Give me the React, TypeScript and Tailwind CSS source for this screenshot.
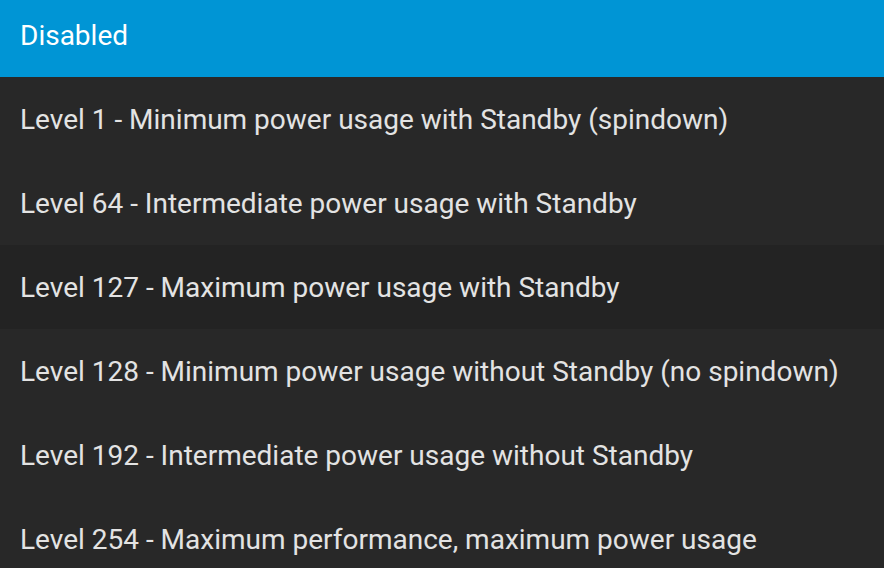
const OPTIONS = [
  "Level 1 - Minimum power usage with Standby (spindown)",
  "Level 64 - Intermediate power usage with Standby",
  "Level 127 - Maximum power usage with Standby",
  "Level 128 - Minimum power usage without Standby (no spindown)",
  "Level 192 - Intermediate power usage without Standby",
  "Level 254 - Maximum performance, maximum power usage",
];

export default function App() {
  return (
    <div
      className="h-[568px] w-[884px] overflow-hidden bg-[#282828] text-[28px] text-[#e3e3e3]"
      style={{ fontFamily: "Roboto, 'Liberation Sans', sans-serif" }}
    >
      <div className="flex h-[77px] items-center bg-[#0095d5] pl-[20px] pb-[5px] text-white">
        Disabled
      </div>
      {OPTIONS.map((label, i) => (
        <div
          key={label}
          className={`flex h-[84px] shrink-0 items-center pl-[20px] pt-[2px] ${
            i === 2 ? "bg-[#232323]" : ""
          }`}
        >
          {label}
        </div>
      ))}
    </div>
  );
}
